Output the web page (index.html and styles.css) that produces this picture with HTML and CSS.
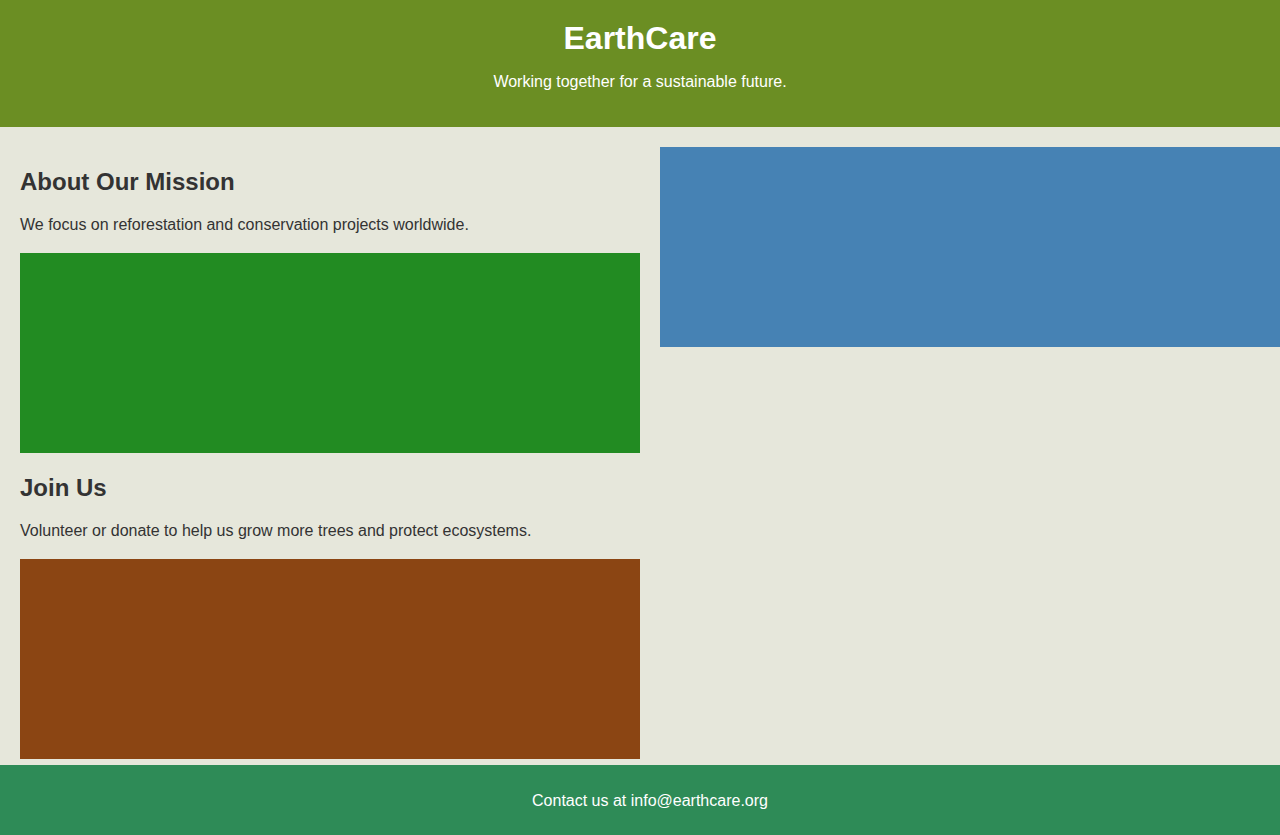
FILE: index.html
```html
<!DOCTYPE html>
<html lang="en">
<head>
<meta charset="utf-8">
<title>EarthCare</title>
<link rel="stylesheet" href="styles.css">
</head>
<body>
<header class="site-header">
  <h1 class="site-title">EarthCare</h1>
  <p class="site-tagline">Working together for a sustainable future.</p>
</header>
<main class="content">
  <div class="column">
    <h2 class="section-title">About Our Mission</h2>
    <p class="section-text">We focus on reforestation and conservation projects worldwide.</p>
    <div class="block block-green"></div>
    <h2 class="section-title">Join Us</h2>
    <p class="section-text">Volunteer or donate to help us grow more trees and protect ecosystems.</p>
    <div class="block block-brown"></div>
  </div>
  <div class="column">
    <div class="block block-blue"></div>
  </div>
</main>
<footer class="site-footer">
  <p class="footer-text">Contact us at info@earthcare.org</p>
</footer>
</body>
</html>
```
FILE: styles.css
```css
* { box-sizing: border-box; }
html, body {
  margin: 0;
  padding: 0;
}
body {
  font-family: "Liberation Sans", Arial, sans-serif;
  background: #e6e7db;
  color: #333333;
  font-size: 16px;
  line-height: 1.15;
}
.site-header {
  background: #6b8e23;
  color: #ffffff;
  text-align: center;
  padding: 20px 20px 36px;
}
.site-title {
  margin: 0;
  font-size: 32px;
  font-weight: bold;
  line-height: 37px;
}
.site-tagline {
  margin: 16px 0 0;
  font-size: 16px;
  line-height: 18px;
}
.content {
  display: grid;
  grid-template-columns: 620px 620px;
  column-gap: 20px;
  padding: 20px 0 6px 20px;
  align-items: start;
}
.column {
  display: flex;
  flex-direction: column;
}
.section-title {
  margin: 20px 0 0;
  padding-top: 1px;
  font-size: 24px;
  font-weight: bold;
  line-height: 27px;
}
.section-text {
  margin: 20px 0 0;
  padding-top: 1px;
  font-size: 16px;
  line-height: 17px;
}
.block {
  height: 200px;
  width: 100%;
}
.column .block-green,
.column .block-brown {
  margin-top: 20px;
}
.block-green { background: #228b22; }
.block-brown { background: #8b4513; }
.block-blue { background: #4682b4; }
.site-footer {
  background: #2e8b57;
  color: #ffffff;
  text-align: center;
  padding: 27px 20px 25px 40px;
}
.footer-text {
  margin: 0;
  font-size: 16px;
  line-height: 18px;
}
```
